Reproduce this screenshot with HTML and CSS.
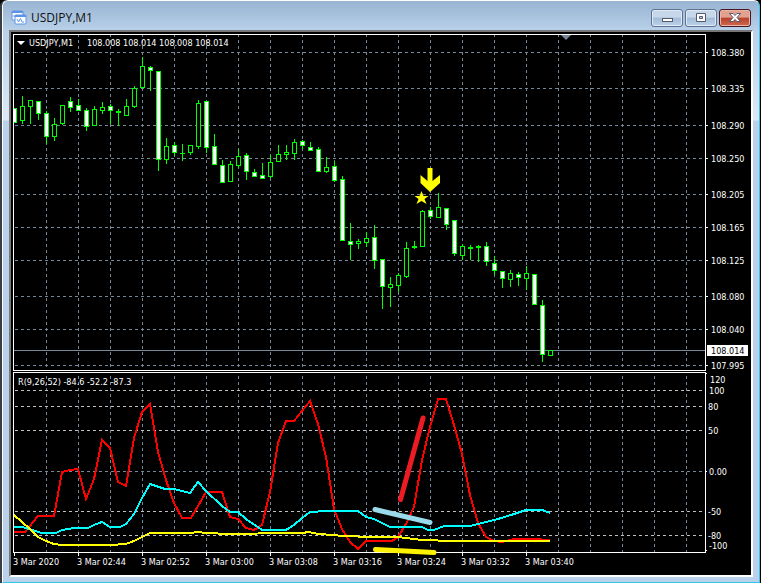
FILE: index.html
```html
<!DOCTYPE html>
<html lang="en">
<head>
  <meta charset="UTF-8">
  <title>USDJPY,M1</title>
  <meta name="viewport" content="width=device-width, initial-scale=1.0">
  <link rel="stylesheet" href="styles.css">
</head>
<body>

  <div class="window">
    <header class="titlebar">
      <svg class="app-icon" width="16" height="16" viewBox="0 0 16 16" aria-hidden="true">
        <rect x="1" y="1" width="11" height="9" rx="1" fill="#fff" stroke="#5b93e8"/>
        <path d="M1 2h11" stroke="#5b93e8" stroke-width="2"/>
        <path d="M3 7V5M5 8V5M4 6h2" stroke="#5b93e8" fill="none"/>
        <rect x="4" y="5" width="11" height="9" rx="1" fill="#fff" stroke="#5b93e8"/>
        <path d="M4 6h11" stroke="#5b93e8" stroke-width="2"/>
        <path d="M6 9l1.500 3 2-3.500 1.500 3.500h2" stroke="#5b93e8" fill="none"/>
      </svg>
      <h1>USDJPY,M1</h1>
      <div class="controls">
        <button class="control" aria-label="Minimize">
          <svg width="12" height="10" viewBox="0 0 12 10"><rect x="1.500" y="5.500" width="10" height="3" fill="#fff" stroke="#545b6e"/></svg>
        </button>
        <button class="control" aria-label="Maximize">
          <svg width="12" height="10" viewBox="0 0 12 10"><path d="M1.500 .5h9v8h-9zM4.500 3.500v2h3v-2z" fill="#fff" fill-rule="evenodd" stroke="#545b6e"/></svg>
        </button>
        <button class="control close" aria-label="Close">
          <svg width="12" height="10" viewBox="0 0 12 10"><path d="M.5.5h3.500l2 2 2-2h3.500L8 4.500l3.500 4H8l-2-2-2 2H.5L4 4.500z" fill="#fff" stroke="#545b6e"/></svg>
        </button>
      </div>
    </header>

    <main class="chart">
      <section class="panel price-panel">
        <svg class="plot" id="price-plot" height="335">
          <g class="grid" id="price-grid"></g>
          <line class="bid-line" x1="0" x2="100%" y1="315.500" y2="315.500"/>
          <path class="shift-mark" d="M547 0h10l-5 5z"/>
          <g id="candles"></g>
          <path class="signal" d="M413.500 133h5v13l7.500-6v8l-10 9-9.500-9v-8l7 6z"/>
          <path class="signal" d="M407.500 156l2 5h5l-4 3 2 5-5-3-5 3 2-5-4-3h5z"/>
          <path class="menu-mark" d="M3 6h8l-4 4z"/>
          <text class="caption" x="15" y="11">USDJPY,M1</text>
          <text class="caption" x="73" y="11">108.008 108.014 108.008 108.014</text>
        </svg>
        <svg class="axis" id="price-axis" width="45" height="335"></svg>
      </section>

      <section class="panel index-panel">
        <svg class="plot" id="index-plot" height="179">
          <g class="grid" id="index-grid"></g>
          <text class="caption" x="4" y="12">R(9,26,52) -84.6 -52.2 -87.3</text>
          <g id="series"></g>
          <g class="strokes">
            <path class="stroke-red" d="M386.500 126.500L409 45"/>
            <path class="stroke-blue" d="M361 136.500L416 149.500"/>
            <path class="stroke-yellow" d="M361.500 176.500L420 179.500"/>
          </g>
        </svg>
        <svg class="axis" id="index-axis" width="45" height="179"></svg>
      </section>

      <ol class="times">
        <li>3 Mar 2020</li>
        <li>3 Mar 02:44</li>
        <li>3 Mar 02:52</li>
        <li>3 Mar 03:00</li>
        <li>3 Mar 03:08</li>
        <li>3 Mar 03:16</li>
        <li>3 Mar 03:24</li>
        <li>3 Mar 03:32</li>
        <li>3 Mar 03:40</li>
      </ol>
    </main>
  </div>

  <script src="script.js"></script>
</body>
</html>
```
FILE: styles.css
```css
* {
  box-sizing: border-box;
}

body {
  margin: 0;
  background: #000;
  font-family: "Open Sans", "Noto Sans", sans-serif;
}

.window {
  min-height: 100vh;
  display: flex;
  flex-direction: column;
  padding: 0 6px 5px;
  background: linear-gradient(#98b4d2, #b9d1ea 30px, #dce9f7 119px, #b9d1ea 120px);
  border: 1px solid #fff;
  border-right-color: #35c5e8;
  border-bottom-color: #35c5e8;
  border-radius: 6px 6px 0 0;
  margin: 0 1px 0 2px;
  box-shadow: -2px 0 0 #3a3f46;
}

.titlebar {
  display: flex;
  align-items: center;
  height: 29px;
  padding: 5px 2px 0 2px;
  gap: 4px;
}

.app-icon {
  flex: none;
}

.titlebar h1 {
  flex: 1;
  margin: 0;
  font-size: 12px;
  font-weight: normal;
  line-height: 18px;
  color: #111;
}

.controls {
  display: flex;
  gap: 2px;
}

.control {
  display: flex;
  align-items: center;
  justify-content: center;
  width: 32px;
  height: 18px;
  padding: 0;
  border: 1px solid #5d7290;
  border-radius: 3px;
  background: linear-gradient(#c6d7ea 45%, #a3bbd6 50%, #bcd2ea);
  box-shadow: inset 0 0 0 1px #dfeaf6;
}

.control svg {
  flex: none;
}

.control.close {
  border-color: #451722;
  background: linear-gradient(#e2a18f 45%, #b8402a 50%, #cf6a4e);
  box-shadow: inset 0 0 0 1px #e9b5a8;
}

.chart {
  flex: 1;
  padding: 2px 0 0 2px;
  background: #000;
  border: 2px solid #fff;
  border-top-color: #777;
  border-left-color: #777;
}

.panel {
  display: flex;
}

.index-panel {
  margin-top: 1px;
}

.plot {
  flex: 1;
  min-width: 0;
  box-sizing: content-box;
  border: 1px solid #fff;
  overflow: visible;
}

.axis {
  flex: none;
  overflow: visible;
}

.caption,
.axis text,
.times {
  font-family: "DejaVu Sans Condensed", "DejaVu Sans", sans-serif;
  font-size: 9px;
  fill: #fff;
  color: #fff;
}

.grid line {
  stroke: #778899;
  stroke-dasharray: 3 3;
}

#price-grid .column {
  stroke-dashoffset: 1;
}

#index-grid .column {
  stroke-dashoffset: 3;
}

.grid .level {
  stroke: #c0c0c0;
}

.bid-line {
  stroke: #778899;
}

.shift-mark {
  fill: #778899;
}

.menu-mark {
  fill: #fff;
}

.signal {
  fill: #ff0;
}

.wick,
.body {
  fill: #0f0;
}

.inside {
  fill: #000;
}

.inside.down {
  fill: #fff;
}

#series polyline {
  fill: none;
  stroke-width: 2;
  shape-rendering: crispEdges;
}

.strokes path {
  fill: none;
  stroke-width: 5;
  stroke-linecap: round;
}

.strokes .stroke-red {
  stroke: #ed1c24;
}

.strokes .stroke-blue {
  stroke: #99d9ea;
}

.strokes .stroke-yellow {
  stroke: #fff200;
}

.axis .tick {
  fill: #fff;
}

.axis .bid-box {
  fill: #fff;
}

.axis .bid {
  fill: #000;
}

.times {
  display: flex;
  margin: 0;
  padding: 0;
  height: 20px;
  list-style: none;
  line-height: 12px;
}

.times li {
  flex: none;
  width: 64px;
  white-space: nowrap;
}

.times li::before {
  content: "";
  display: block;
  width: 1px;
  height: 3px;
  margin-left: 1px;
  background: #fff;
}
```
FILE: script.js
```js
const SVG = 'http://www.w3.org/2000/svg';

// high, body top, body bottom, low, type (u: up, d: down)
const candles = [
  [73, 73, 88, 88, 'd'], [61, 71, 86, 89, 'u'], [65, 65, 72, 89, 'u'], [66, 66, 79, 85, 'd'],
  [76, 78, 102, 109, 'd'], [83, 89, 102, 106, 'u'], [70, 70, 89, 90, 'u'], [62, 66, 73, 77, 'd'],
  [64, 70, 76, 76, 'd'], [73, 75, 92, 96, 'd'], [71, 74, 91, 91, 'u'], [67, 72, 76, 79, 'u'],
  [69, 71, 76, 89, 'd'], [74, 76, 78, 91, 'u'], [64, 71, 81, 81, 'u'], [51, 53, 72, 73, 'u'],
  [22, 31, 53, 54, 'u'], [31, 32, 36, 56, 'd'], [36, 36, 125, 136, 'd'], [103, 111, 125, 129, 'u'],
  [107, 110, 118, 121, 'd'], [109, 118, 119, 126, 'u'], [110, 110, 118, 120, 'u'], [65, 68, 112, 114, 'u'],
  [66, 66, 113, 118, 'd'], [99, 111, 130, 130, 'd'], [125, 130, 148, 148, 'd'], [126, 129, 147, 147, 'u'],
  [114, 121, 131, 133, 'u'], [118, 120, 137, 145, 'd'], [134, 137, 142, 142, 'd'], [128, 140, 144, 144, 'd'],
  [120, 127, 142, 143, 'u'], [110, 119, 127, 127, 'u'], [110, 117, 120, 125, 'u'], [104, 107, 119, 125, 'u'],
  [105, 106, 111, 114, 'd'], [107, 112, 116, 116, 'd'], [112, 114, 137, 137, 'd'], [122, 132, 137, 138, 'u'],
  [126, 131, 146, 147, 'd'], [141, 144, 206, 206, 'd'], [188, 206, 210, 225, 'd'], [204, 206, 209, 214, 'u'],
  [197, 203, 208, 212, 'u'], [190, 202, 226, 234, 'd'], [224, 224, 252, 274, 'd'], [242, 249, 253, 272, 'u'],
  [238, 240, 251, 257, 'u'], [207, 213, 242, 243, 'u'], [206, 211, 213, 214, 'u'], [175, 176, 212, 212, 'u'],
  [172, 175, 182, 184, 'd'], [158, 172, 183, 183, 'u'], [173, 173, 190, 195, 'd'], [185, 185, 219, 221, 'd'],
  [209, 211, 221, 225, 'u'], [210, 212, 214, 225, 'u'], [210, 211, 213, 227, 'u'], [207, 211, 227, 231, 'd'],
  [221, 228, 236, 240, 'd'], [236, 236, 244, 253, 'd'], [235, 238, 245, 252, 'u'], [237, 239, 243, 251, 'd'],
  [231, 238, 244, 255, 'u'], [239, 239, 270, 270, 'd'], [265, 270, 320, 327, 'd'], [315, 315, 321, 321, 'u']
];

const series = [
  ['#ff0000', '0,159 11,159 24,143 40,143 48,99 56,97 64,96 72,126 80,106 88,67 96,75 104,109 112,113 120,65 128,39 136,31 144,79 152,107 160,130 168,145 177,145 184,133 192,119 208,119 216,144 224,146 232,155 240,157 248,152 256,119 264,70 272,48 280,48 288,38 296,28 304,51 312,84 320,136 328,156 336,169 344,176 352,168 378,168 384,164 392,151 400,134 408,87 416,54 424,26 432,26 440,52 448,81 456,122 464,150 472,164 480,168 488,169 500,166 520,166 536,167'],
  ['#00ffff', '0,154 8,154 28,160 42,160 48,157 60,155 74,155 80,152 88,149 96,154 106,154 112,151 120,141 128,125 136,111 151,116 160,116 168,118 176,120 184,109 192,118 208,133 216,139 224,139 232,146 248,157 272,157 280,152 288,145 296,139 312,138 344,138 352,144 360,146 376,154 408,154 414,157 420,157 430,153 456,153 472,149 484,146 497,142 512,137 528,137 536,140'],
  ['#ffff00', '0,142 16,156 24,164 32,168 40,171 48,172 96,172 112,171 120,168 128,164 136,160 176,160 184,159 192,160 216,161 272,160 288,160 295,159 304,161 320,162 328,163 360,164 384,164 408,167 440,168 536,168']
];

const prices = [
  ['108.380', 17], ['108.335', 53], ['108.290', 90], ['108.250', 123], ['108.205', 159],
  ['108.165', 192], ['108.125', 225], ['108.080', 261], ['108.040', 294], ['107.995', 330]
];

// label, y of the label, x of the label
const levels = [
  ['120', 6, 4], ['100', 17, 3], ['80', 33, 2], ['50', 57, 2], ['0.00', 98, 3],
  ['-50', 138, 2], ['-80', 162, 2], ['-100', 172, 3]
];

function draw(parent, name, attrs, text) {
  const el = document.createElementNS(SVG, name);
  for (const key in attrs) el.setAttribute(key, attrs[key]);
  if (text) el.textContent = text;
  parent.appendChild(el);
  return el;
}

function drawGrid(id, height, rows, levelRows) {
  const grid = document.getElementById(id);
  const width = grid.ownerSVGElement.getBoundingClientRect().width - 2;
  for (let x = 32; x < width; x += 32) {
    draw(grid, 'line', { class: 'column', x1: x + 0.5, x2: x + 0.5, y1: 0, y2: height });
  }
  rows.concat(levelRows).forEach(y => {
    const cls = levelRows.includes(y) ? 'level' : 'row';
    draw(grid, 'line', { class: cls, x1: 1, x2: width, y1: y + 0.5, y2: y + 0.5 });
  });
}

function drawCandles() {
  const group = document.getElementById('candles');
  candles.forEach(([high, top, bottom, low, type], i) => {
    const x = i * 8;
    const left = Math.max(x - 2, 0);
    draw(group, 'rect', { class: 'wick', x: x, y: high, width: 1, height: low - high });
    draw(group, 'rect', { class: 'body', x: left, y: top, width: x + 3 - left, height: bottom - top });
    if (bottom - top > 2) {
      const inner = Math.max(x - 1, 0);
      draw(group, 'rect', {
        class: type === 'd' ? 'inside down' : 'inside',
        x: inner, y: top + 1, width: x + 2 - inner, height: bottom - top - 2
      });
    }
  });
}

function drawAxes() {
  const priceAxis = document.getElementById('price-axis');
  prices.forEach(([label, y]) => {
    draw(priceAxis, 'rect', { class: 'tick', x: 0, y: y + 1, width: 2, height: 1 });
    draw(priceAxis, 'text', { x: 5, y: y + 5 }, label);
  });
  draw(priceAxis, 'rect', { class: 'bid-box', x: 1, y: 311, width: 41, height: 11 });
  draw(priceAxis, 'text', { class: 'bid', x: 5, y: 320 }, '108.014');

  const indexAxis = document.getElementById('index-axis');
  levels.forEach(([label, y, x]) => {
    draw(indexAxis, 'text', { x: x, y: y + 5 }, label);
  });
  [1, 99, 178].forEach(y => {
    draw(indexAxis, 'rect', { class: 'tick', x: 0, y: y, width: 1, height: 1 });
  });
}

drawGrid('price-grid', 335, [17, 53, 90, 123, 159, 192, 225, 261, 294, 330], []);
drawGrid('index-grid', 179, [98], [17, 33, 57, 138, 162]);
drawCandles();
series.forEach(([color, points]) => {
  draw(document.getElementById('series'), 'polyline', { points: points, stroke: color });
});
drawAxes();
```
